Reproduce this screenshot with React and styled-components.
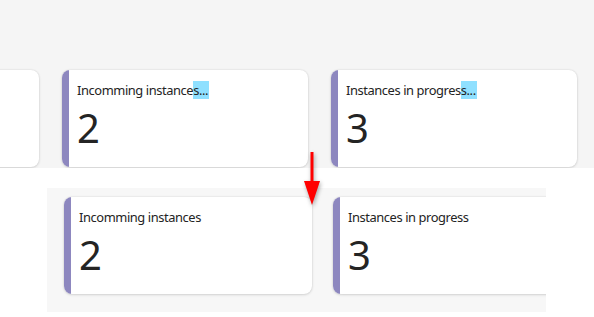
import React from "react";
import styled, { createGlobalStyle } from "styled-components";

const GlobalStyle = createGlobalStyle`
  html, body { margin: 0; padding: 0; background: #ffffff; }
  body { font-family: "Noto Sans", "Open Sans", sans-serif; color: #242424; }
`;

const Page = styled.div`
  position: relative;
  width: 594px;
  height: 317px;
  overflow: hidden;
  background: #ffffff;
`;

const TopStrip = styled.section`
  box-sizing: border-box;
  height: 168px;
  padding-top: 70px;
  background: #f5f5f5;
  overflow: hidden;
`;

const Row = styled.div`
  display: flex;
  gap: ${(p) => p.$gap}px;
  margin-left: ${(p) => p.$offset || 0}px;
`;

const BottomArea = styled.section`
  padding: 20px 0 0 47px;
`;

const Panel = styled.div`
  box-sizing: border-box;
  width: 499px;
  height: 124px;
  padding: 9px 0 0 17px;
  background: #f7f7f7;
  overflow: hidden;
`;

const Card = styled.div`
  flex: 0 0 ${(p) => p.$w}px;
  height: 97px;
  display: flex;
  background: #ffffff;
  border-radius: 8px;
  overflow: hidden;
  box-shadow: 0 0 2px rgba(0, 0, 0, 0.12), 0 1px 3px rgba(0, 0, 0, 0.12);
`;

const Accent = styled.div`
  flex: 0 0 7px;
  background: #8d87bf;
`;

const Body = styled.div`
  padding: 10px 8px 0 8px;
  min-width: 0;
`;

const Title = styled.div`
  font-size: 12.9px;
  letter-spacing: -0.42px;
  line-height: 20px;
  white-space: nowrap;
  color: #242424;
`;

const Mark = styled.span`
  background: #8fe0ff;
  padding-right: 1px;
`;

const Value = styled.div`
  margin-top: 8px;
  font-size: 40px;
  line-height: 40px;
  color: #242424;
`;

const Arrow = styled.svg`
  position: absolute;
  left: 303px;
  top: 151px;
  filter: drop-shadow(1px 2px 2px rgba(0, 0, 0, 0.35));
`;

function KpiCard({ w, title, mark, value }) {
  return (
    <Card $w={w}>
      <Accent />
      {title && (
        <Body>
          <Title>
            {title}
            {mark && <Mark>{mark}</Mark>}
          </Title>
          <Value>{value}</Value>
        </Body>
      )}
    </Card>
  );
}

export default function App() {
  return (
    <>
      <GlobalStyle />
      <Page>
        <TopStrip>
          <Row $gap={23} $offset={-207}>
            <KpiCard w={246} />
            <KpiCard w={246} title="Incomming instance" mark="s..." value="2" />
            <KpiCard w={246} title="Instances in progres" mark="s..." value="3" />
          </Row>
        </TopStrip>
        <BottomArea>
          <Panel>
            <Row $gap={21}>
              <KpiCard w={248} title="Incomming instances" value="2" />
              <KpiCard w={248} title="Instances in progress" value="3" />
            </Row>
          </Panel>
        </BottomArea>
        <Arrow width="18" height="56" viewBox="0 0 18 56">
          <rect x="7.5" y="1" width="3" height="30" fill="#ff0000" />
          <polygon points="1,30 17,30 9,54" fill="#ff0000" />
        </Arrow>
      </Page>
    </>
  );
}
